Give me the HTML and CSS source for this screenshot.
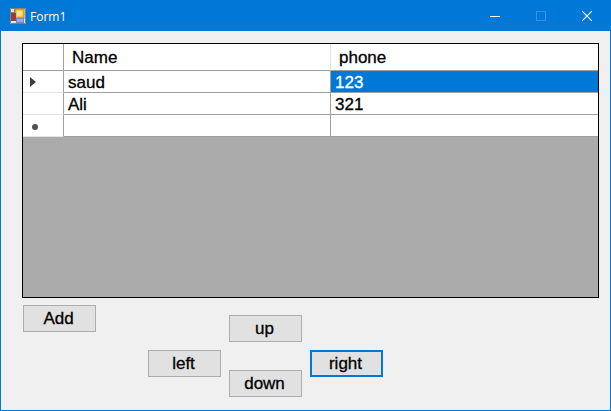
FILE: index.html
```html
<!DOCTYPE html>
<html lang="en">
<head>
<meta charset="utf-8">
<title>Form1</title>
<link rel="stylesheet" href="styles.css">
</head>
<body>
<div class="window">
  <header class="titlebar">
    <svg class="app-icon" width="16" height="16" viewBox="0 0 16 16" aria-hidden="true">
      <rect x="0" y="0" width="16" height="16" fill="#e4e8ee"/>
      <path d="M0.5 0.5H15.5V15.5H0.5ZM0.5 4.5H5M4.5 0.5V4.5" fill="none" stroke="#76808e"/>
      <rect x="5" y="1" width="9" height="9" fill="#f4c63c" stroke="#a9832a" stroke-width="1"/>
      <rect x="7" y="3" width="5" height="5" fill="#fbe28a"/>
      <rect x="1.5" y="5.5" width="4" height="7" fill="#b92f2f" stroke="#7d4a4a"/>
      <rect x="6.5" y="10.5" width="7" height="4" fill="#8db0e6" stroke="#6f89b8"/>
    </svg>
    <span class="title">Form1</span>
    <div class="controls">
      <span class="control"><svg width="10" height="10" viewBox="0 0 10 10"><path d="M0 5.5H10" stroke="#fff"/></svg></span>
      <span class="control"><svg width="10" height="10" viewBox="0 0 10 10"><rect x="0.5" y="0.5" width="9" height="9" fill="none" stroke="#3a92e0"/></svg></span>
      <span class="control"><svg width="10" height="10" viewBox="0 0 10 10"><path d="M0 0L10 10M10 0L0 10" stroke="#fff" stroke-width="1.1"/></svg></span>
    </div>
  </header>
  <main class="client">
    <div class="grid">
      <div class="row row-head">
        <div class="cell rowhead head-corner"></div>
        <div class="cell col-name head-cell">Name</div>
        <div class="cell col-phone head-cell">phone</div>
      </div>
      <div class="row">
        <div class="cell rowhead"><svg width="6" height="10" viewBox="0 0 6 10"><path d="M0 0L6 5L0 10Z" fill="#3f3f3f"/></svg></div>
        <div class="cell col-name">saud</div>
        <div class="cell col-phone selected">123</div>
      </div>
      <div class="row">
        <div class="cell rowhead"></div>
        <div class="cell col-name">Ali</div>
        <div class="cell col-phone">321</div>
      </div>
      <div class="row">
        <div class="cell rowhead"><span class="new-mark"></span></div>
        <div class="cell col-name"></div>
        <div class="cell col-phone"></div>
      </div>
    </div>
    <div class="actions">
      <div class="action-col"><button class="btn">Add</button></div>
      <div class="action-col col-left"><button class="btn">left</button></div>
      <div class="action-col col-mid">
        <button class="btn">up</button>
        <button class="btn btn-down">down</button>
      </div>
      <div class="action-col col-right"><button class="btn btn-focus">right</button></div>
    </div>
  </main>
</div>
</body>
</html>
```

FILE: styles.css
```css
* { box-sizing: border-box; }

html, body {
  margin: 0;
  padding: 0;
}

body {
  width: 611px;
  height: 411px;
  overflow: hidden;
  font-family: "Liberation Sans", Arial, sans-serif;
}

.window {
  width: 611px;
  height: 411px;
  border: 1px solid #0078d7;
  background: #f0f0f0;
  display: flex;
  flex-direction: column;
}

.titlebar {
  height: 30px;
  flex: none;
  background: #0078d7;
  color: #fff;
  display: flex;
  align-items: center;
  padding-left: 9px;
}

.app-icon { flex: none; }

.title {
  margin-left: 4px;
  font-family: "Open Sans", "Liberation Sans", sans-serif;
  font-size: 12px;
}

.controls {
  margin-left: auto;
  display: flex;
  height: 30px;
}

.control {
  width: 46px;
  height: 30px;
  display: flex;
  align-items: center;
  justify-content: center;
}

.client {
  flex: 1;
  padding: 12px 0 0 21px;
}

.grid {
  width: 577px;
  height: 255px;
  border: 1px solid #000;
  background: #ababab;
}

.row {
  display: flex;
  height: 22px;
}

.row-head { height: 27px; }

.cell {
  background: #fff;
  border-right: 1px solid #a0a0a0;
  border-bottom: 1px solid #a0a0a0;
  font-size: 17px;
  -webkit-text-stroke: 0.3px currentColor;
  color: #000;
  display: flex;
  align-items: center;
  padding-left: 4px;
  white-space: nowrap;
}

.rowhead {
  width: 41px;
  flex: none;
  padding-left: 7px;
  border-right-color: #a0a0a0;
  border-bottom-color: #e3e3e3;
}

.head-corner { border-bottom-color: #a0a0a0; }

.col-name { width: 267px; flex: none; padding-top: 2px; }

.col-phone { flex: 1; border-right: none; padding-top: 2px; }

.head-cell {
  padding-left: 8px;
  border-right-color: #e3e3e3;
}

.selected {
  background: #0078d7;
  color: #fff;
}

.new-mark {
  width: 6px;
  height: 6px;
  border-radius: 50%;
  background: #505050;
  margin-top: 3px;
  margin-left: 2px;
}

.actions {
  display: flex;
  align-items: flex-start;
  margin: 7px 0 0 1px;
}

.action-col {
  display: flex;
  flex-direction: column;
  flex: none;
}

.col-left { margin: 45px 0 0 52px; }

.col-mid { margin: 10px 0 0 8px; }

.col-right { margin: 45px 0 0 8px; }

.btn {
  width: 73px;
  height: 27px;
  padding: 0 2px 0 0;
  background: #e1e1e1;
  border: 1px solid #adadad;
  border-radius: 0;
  font: 17px "Liberation Sans", Arial, sans-serif;
  -webkit-text-stroke: 0.3px currentColor;
  color: #000;
}

.btn-down { margin-top: 28px; }

.btn-focus {
  border: 2px solid #0078d7;
}
```
